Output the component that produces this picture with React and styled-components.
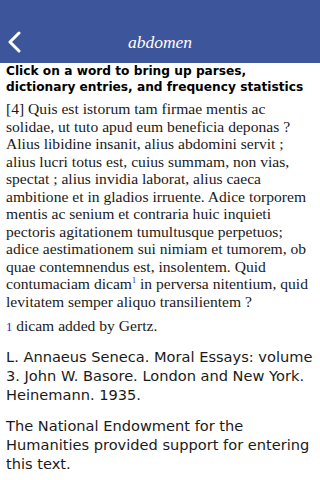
import React from 'react'
import styled, {createGlobalStyle} from 'styled-components'

const GlobalStl = createGlobalStyle`
  body {
    margin: 0;
    background: #fff;
  }
`

const PageStl = styled.div`
  width: 320px;
  min-height: 480px;
  background: #fff;
  color: #111;
`

const HeaderStl = styled.div`
  height: 63px;
  background: #3d559b;
  display: flex;
  align-items: flex-end;
  justify-content: center;
  position: relative;
  box-sizing: border-box;
  padding-bottom: 9px;
`

const BackStl = styled.div`
  position: absolute;
  left: 7px;
  bottom: 10px;
  width: 16px;
  height: 22px;
`

const TitleStl = styled.div`
  font-family: "Liberation Serif", serif;
  font-style: italic;
  font-size: 17.5px;
  color: #fff;
  line-height: 24px;
`

const ContentStl = styled.div`
  padding: 0 0 0 6px;
`

const HintStl = styled.div`
  font-family: "DejaVu Sans", Verdana, sans-serif;
  font-weight: bold;
  font-size: 12.2px;
  line-height: 16px;
  padding-right: 10px;
  color: #000;
`

const PassageStl = styled.div`
  font-family: "Liberation Serif", Georgia, serif;
  font-size: 15.6px;
  line-height: 17.5px;
  margin-top: 5px;
  color: #1a1a1a;
`

const LineStl = styled.span`
  display: block;
  white-space: nowrap;
`

const SupStl = styled.sup`
  color: #2222cc;
  font-size: 8px;
  line-height: 0;
  vertical-align: 6px;
`

const NoteStl = styled.p`
  font-family: "Liberation Serif", Georgia, serif;
  font-size: 15.6px;
  line-height: 17.5px;
  margin: 7px 0 0 0;
  color: #1a1a1a;
`

const NoteNumStl = styled.span`
  color: #2222cc;
  font-size: 12.5px;
`

const CreditStl = styled.p`
  font-family: "DejaVu Sans", Verdana, sans-serif;
  font-size: 14.6px;
  line-height: 19px;
  margin: ${p => p.$gap}px 0 0 0;
  padding-right: 4px;
  color: #1a1a1a;
`

const passage = [
  '[4] Quis est istorum tam firmae mentis ac',
  'solidae, ut tuto apud eum beneficia deponas ?',
  'Alius libidine insanit, alius abdomini servit ;',
  'alius lucri totus est, cuius summam, non vias,',
  'spectat ; alius invidia laborat, alius caeca',
  'ambitione et in gladios irruente. Adice torporem',
  'mentis ac senium et contraria huic inquieti',
  'pectoris agitationem tumultusque perpetuos;',
  'adice aestimationem sui nimiam et tumorem, ob',
  'quae contemnendus est, insolentem. Quid',
]

export default function App() {
  return (
    <PageStl>
      <GlobalStl/>
      <HeaderStl>
        <BackStl>
          <svg width="16" height="22" viewBox="0 0 16 22">
            <path d="M12 2 L3 11 L12 20" stroke="#fff" strokeWidth="3" fill="none" strokeLinecap="round" strokeLinejoin="round"/>
          </svg>
        </BackStl>
        <TitleStl>abdomen</TitleStl>
      </HeaderStl>
      <ContentStl>
        <HintStl>Click on a word to bring up parses, dictionary entries, and frequency statistics</HintStl>
        <PassageStl>
          {passage.map((line, i) => <LineStl key={i}>{line}</LineStl>)}
          <LineStl>contumaciam dicam<SupStl>1</SupStl> in perversa nitentium, quid</LineStl>
          <LineStl>levitatem semper aliquo transilientem ?</LineStl>
        </PassageStl>
        <NoteStl><NoteNumStl>1</NoteNumStl> dicam added by Gertz.</NoteStl>
        <CreditStl $gap={10}>L. Annaeus Seneca. Moral Essays: volume 3. John W. Basore. London and New York. Heinemann. 1935.</CreditStl>
        <CreditStl $gap={12}>The National Endowment for the Humanities provided support for entering this text.</CreditStl>
      </ContentStl>
    </PageStl>
  )
}
